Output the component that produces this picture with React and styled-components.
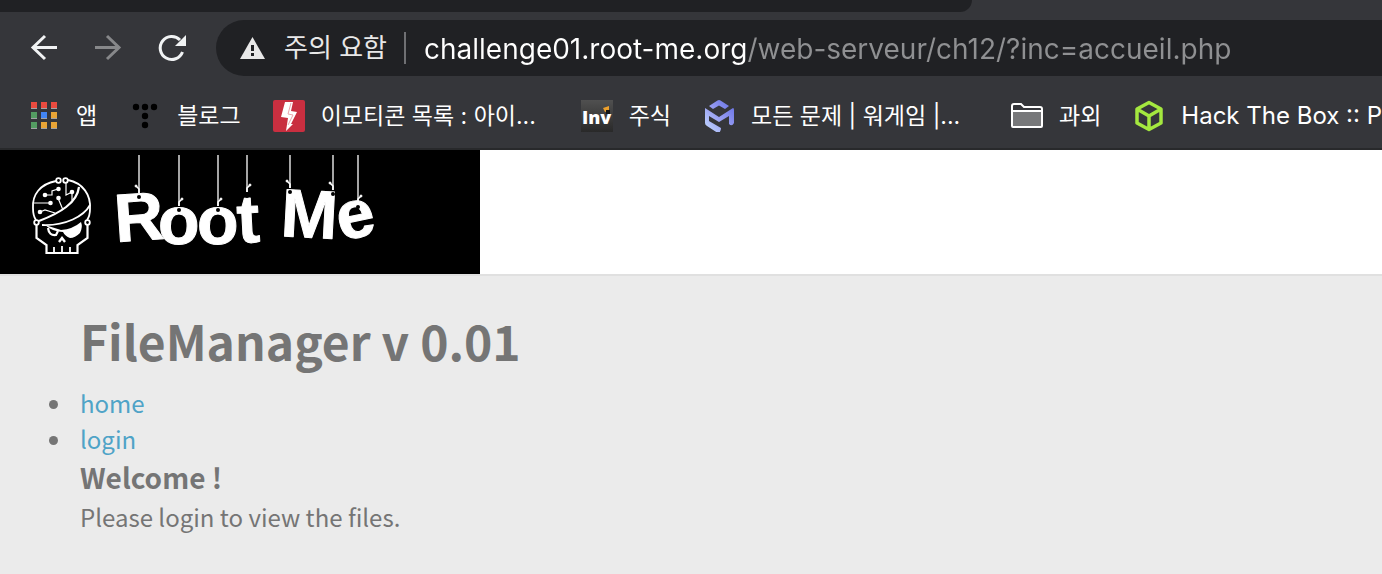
import React from "react";
import styled, { createGlobalStyle } from "styled-components";

const GlobalStyle = createGlobalStyle`
  * {
    box-sizing: border-box;
  }
  body {
    margin: 0;
    background: #ebebeb;
    overflow-x: hidden;
  }
`;

const Browser = styled.div`
  background: #35363a;
  border-bottom: 2px solid #28292b;
  color: #ffffff;
  font-family: Inter, "Noto Sans CJK KR", sans-serif;
  overflow: hidden;
`;

const TabStrip = styled.div`
  height: 12px;
  margin-right: 410px;
  border-bottom-right-radius: 16px;
  background: #202124;
`;

const Toolbar = styled.div`
  display: flex;
  align-items: center;
  padding: 8px 0 0 28px;
`;

const NavButton = styled.button`
  display: flex;
  width: 32px;
  height: 32px;
  margin-right: 32px;
  padding: 0;
  border: none;
  background: none;
  color: ${(props) => (props.disabled ? "#87888a" : "#f1f3f4")};
`;

const AddressBar = styled.div`
  flex: 1;
  display: flex;
  align-items: center;
  height: 56px;
  margin-left: -4px;
  padding-left: 24px;
  border-radius: 28px 0 0 28px;
  background: #202124;
  font-size: 26px;
`;

const SiteInfo = styled.button`
  display: flex;
  align-items: center;
  gap: 19px;
  padding: 0 17px 0 0;
  border: none;
  border-right: 2px solid #6f7073;
  background: none;
  color: #e8e8e8;
  font: inherit;
  line-height: 32px;
  white-space: nowrap;
`;

const Url = styled.input`
  flex: 1;
  min-width: 0;
  height: 42px;
  padding: 2px 0 0;
  margin-left: 18px;
  border: none;
  outline: none;
  color: #ffffff;
  font-family: Inter, sans-serif;
  font-size: 28px;
  background: linear-gradient(to right, #ffffff 324px, #8f9092 324px);
  background-clip: text;
  -webkit-background-clip: text;
  -webkit-text-fill-color: transparent;
`;

const Bookmarks = styled.nav`
  display: flex;
  align-items: center;
  gap: 32px;
  height: 72px;
  padding: 8px 0 0 28px;
`;

const Bookmark = styled.a`
  flex: none;
  display: flex;
  align-items: center;
  gap: 16px;
  color: #ffffff;
  font-size: ${(props) => (props.$latin ? "24px" : "23px")};
  line-height: 32px;
  text-decoration: none;
  white-space: nowrap;
`;

const BookmarkTitle = styled.span`
  min-width: ${(props) => (props.$long ? "228px" : "0")};
`;

const Icon = styled.svg`
  display: block;
  flex: none;
  width: 32px;
  height: 32px;
`;

const SiteHeader = styled.header`
  background: #ffffff;
  border-bottom: 2px solid #e0e0e0;
`;

const Logo = styled.svg`
  display: block;
  width: 480px;
  height: 124px;
  background: #000000;
`;

const Content = styled.main`
  padding: 26px 80px;
  color: #757575;
  font-family: "Noto Sans CJK KR", sans-serif;
  font-size: 24px;
  line-height: 36px;
`;

const Title = styled.h1`
  margin: 0 0 7px;
  font-size: 48px;
  line-height: 76px;
`;

const Menu = styled.ul`
  margin: 0 0 0 -6px;
  padding: 0;
`;

const MenuItem = styled.li`
  padding-left: 6px;
`;

const MenuLink = styled.a`
  color: #4fa3c7;
  text-decoration: none;
`;

const Subtitle = styled.h3`
  margin: 0;
  font-size: 28px;
  line-height: 40px;
`;

const Text = styled.p`
  margin: 0;
  line-height: 40px;
`;

const BackIcon = () => (
  <Icon viewBox="0 0 32 32" fill="none" stroke="currentColor" strokeWidth="3">
    <path d="M29 15.500H5M17 4 5 15.500 17 27" />
  </Icon>
);

const ForwardIcon = () => (
  <Icon viewBox="0 0 32 32" fill="none" stroke="currentColor" strokeWidth="3">
    <path d="M3 15.500h24M15 4l12 11.500L15 27" />
  </Icon>
);

const ReloadIcon = () => (
  <Icon viewBox="0 0 32 32" fill="none">
    <path
      d="M26.500 20A11.500 11.500 0 1 1 24 8"
      stroke="currentColor"
      strokeWidth="3"
    />
    <path d="M30 3v11H19z" fill="currentColor" />
  </Icon>
);

const WarningIcon = () => (
  <svg width="25" height="22" viewBox="0 0 25 22">
    <path d="M12.500 0 25 22H0z" fill="#e8e8e8" />
    <path d="M11 8h3v6h-3zM11 16h3v3h-3z" fill="#202124" />
  </svg>
);

const appColors = [
  ["#e94b3f", "#e94b3f", "#e94b3f"],
  ["#549c62", "#4285f4", "#e8a436"],
  ["#549c62", "#e8a436", "#e8a436"],
];

const AppsIcon = () => (
  <Icon viewBox="0 0 32 32">
    {appColors.map((row, y) =>
      row.map((color, x) => (
        <g key={`${x}-${y}`}>
          <rect x={3 + x * 10} y={2 + y * 10} width="6" height="7" fill="#a2a3a5" />
          <rect x={3 + x * 10} y={2 + y * 10} width="6" height="6" fill={color} />
        </g>
      ))
    )}
  </Icon>
);

const TistoryIcon = () => (
  <Icon viewBox="0 0 32 32">
    <circle cx="7" cy="7" r="3.200" />
    <circle cx="16" cy="7" r="3.200" />
    <circle cx="25" cy="7" r="3.200" />
    <circle cx="16" cy="16" r="3.200" />
    <circle cx="16" cy="25" r="3.200" />
  </Icon>
);

const BoltIcon = () => (
  <Icon viewBox="0 0 32 32">
    <rect width="32" height="32" rx="2" fill="#c92f40" />
    <path d="M12 2h8l-2 9 6 1-6 12h2l-7 7 2-13-7-1z" fill="#ffffff" />
    <path d="m18 3-3 11 5 1-5 10" fill="none" stroke="#e9a5ac" />
  </Icon>
);

const InvIcon = () => (
  <Icon viewBox="0 0 32 32">
    <defs>
      <linearGradient id="inv" x2="0" y2="1">
        <stop stopColor="#505050" />
        <stop offset="1" stopColor="#292929" />
      </linearGradient>
    </defs>
    <rect width="32" height="32" fill="url(#inv)" />
    <text
      x="1"
      y="24"
      fill="#ffffff"
      fontFamily="Open Sans"
      fontSize="18"
      fontWeight="800"
    >
      Inv
    </text>
    <path d="M22 8l6-2v5l-4 1z" fill="#eda02c" />
    <path d="M25 10h4v4h-4z" fill="#171717" />
  </Icon>
);

const WargameIcon = () => (
  <Icon viewBox="0 0 32 32" fill="none">
    <defs>
      <linearGradient id="wargame" x1="1" x2="0" y2="1">
        <stop stopColor="#626de5" />
        <stop offset=".5" stopColor="#969cf1" />
        <stop offset="1" stopColor="#c5dcff" />
      </linearGradient>
    </defs>
    <path
      d="M6 6 14.500 .5q1.500-1 3 0L26 6l-4 3-6-3.500L10 9zM2 8l14 9 14-9q1 0 1 2v13q-2 4-5 1v-8l-10 6-10-6v5l12 7q0 3-2 5-1 0-2-.5L4 26q-2-1-2-3z"
      fill="url(#wargame)"
    />
  </Icon>
);

const FolderIcon = () => (
  <Icon viewBox="0 0 32 32" fill="none" stroke="#ffffff" strokeWidth="2">
    <path d="M1 26V6q0-2 2-2h7l3 3h16q2 0 2 2v17q0 1-1 1H2q-1 0-1-1zM1 11h30" />
    <path d="M2 12h28v14H2z" fill="#77787a" stroke="none" />
  </Icon>
);

const BoxIcon = () => (
  <Icon
    viewBox="0 0 32 32"
    fill="none"
    stroke="#a4e83f"
    strokeWidth="3.500"
    strokeLinejoin="round"
  >
    <path d="m16 2.500 12 6.500v14L16 29.500 4 23V9zM4 9l12 7 12-7M16 16v13" />
  </Icon>
);

const bookmarks = [
  { title: "앱", icon: AppsIcon },
  { title: "블로그", icon: TistoryIcon },
  { title: "이모티콘 목록 : 아이...", icon: BoltIcon, long: true },
  { title: "주식", icon: InvIcon },
  { title: "모든 문제 | 워게임 |...", icon: WargameIcon, long: true },
  { title: "과외", icon: FolderIcon },
  { title: "Hack The Box :: P", icon: BoxIcon, latin: true },
];

// where each string ends, and which way its knot leans
const strings = [
  { x: 139, y: 43, lean: -1 },
  { x: 179, y: 56, lean: 1 },
  { x: 218, y: 56, lean: 1 },
  { x: 247, y: 42, lean: 1 },
  { x: 290, y: 38, lean: -1 },
  { x: 333, y: 40, lean: -1 },
  { x: 358, y: 53, lean: 1 },
];

const RootMeLogo = () => (
  <Logo viewBox="0 0 480 124" role="img" aria-label="Root Me">
    <g fill="none" stroke="#ffffff" strokeWidth="1.800">
      <path d="M56 31C40 34 32 45 33 58q0 8 3 12M68 30c15 3 23 15 22 29q0 7-3 11" />
      <path d="M36.500 75v13l10 7v8h31v-8l10-7V75" strokeWidth="2.200" />
      <path d="M39 71C60 63 77 53 79 37" strokeWidth="2.200" />
      <path d="M42 75c24 1 42-9 48-20" />
      <path d="M54 103v-6M62 103v-7M70 103v-6" />
      <path d="m59 92 3-4 3 4" strokeWidth="2.400" />
      <path d="M48 78q1 8 8 7l2-4" strokeWidth="2.200" />
      <circle cx="58.500" cy="30.500" r="2.300" />
      <circle cx="65.500" cy="30.500" r="2.300" />
      <circle cx="36.500" cy="72.500" r="2.300" />
      <circle cx="87.500" cy="72.500" r="2.300" />
      <path
        d="M45 45h7v-4l6-2M66 33v12l6-3M72 43v7M34 53h15M58 48l5 12M40 62l5-2 10 3"
        strokeWidth="1.200"
      />
    </g>
    <g fill="#ffffff">
      <circle cx="45" cy="45" r="2.300" />
      <circle cx="58.500" cy="39" r="2.300" />
      <circle cx="72" cy="42" r="2.300" />
      <circle cx="50.500" cy="53" r="2.300" />
      <circle cx="58.500" cy="48" r="2.300" />
      <circle cx="40" cy="62" r="2.300" />
      <path d="m45 75 16 5q12-1 20-8 2 5-1 11-5 5-10 5-5-2-7-6-10 0-18-7z" />
    </g>
    <text
      x="116 158 197 238 262 280 341"
      y="92 94 94 93 90 86 91"
      rotate="-4 0 0 -3 0 3 -12"
      fill="#ffffff"
      stroke="#ffffff"
      strokeLinejoin="round"
      fontFamily="Liberation Sans"
      fontSize="68"
      fontWeight="700"
    >
      Root Me
    </text>
    {strings.map(({ x, y, lean }) => (
      <g key={x} fill="none" stroke="#ffffff">
        <path d={`M${x} 5V${y}`} strokeWidth="1.300" />
        <path d={`M${x} ${y}v-4l${lean * 3}-3`} strokeWidth="1.600" />
        <circle cx={x + lean * 3} cy={y - 7} r="1" fill="#ffffff" />
        <circle cx={x} cy={y + 4} r="2" fill="#000000" stroke="none" />
      </g>
    ))}
  </Logo>
);

const App = () => {
  return (
    <>
      <GlobalStyle />
      <Browser>
        <TabStrip />
        <Toolbar>
          <NavButton aria-label="Back">
            <BackIcon />
          </NavButton>
          <NavButton aria-label="Forward" disabled>
            <ForwardIcon />
          </NavButton>
          <NavButton aria-label="Reload">
            <ReloadIcon />
          </NavButton>
          <AddressBar>
            <SiteInfo>
              <WarningIcon />
              주의 요함
            </SiteInfo>
            <Url
              aria-label="Address"
              spellCheck={false}
              defaultValue="challenge01.root-me.org/web-serveur/ch12/?inc=accueil.php"
            />
          </AddressBar>
        </Toolbar>
        <Bookmarks>
          {bookmarks.map(({ title, icon: BookmarkIcon, long, latin }) => (
            <Bookmark key={title} href="#" $latin={latin}>
              <BookmarkIcon />
              <BookmarkTitle $long={long}>{title}</BookmarkTitle>
            </Bookmark>
          ))}
        </Bookmarks>
      </Browser>
      <SiteHeader>
        <RootMeLogo />
      </SiteHeader>
      <Content>
        <Title>FileManager v 0.01</Title>
        <Menu>
          <MenuItem>
            <MenuLink href="#home">home</MenuLink>
          </MenuItem>
          <MenuItem>
            <MenuLink href="#login">login</MenuLink>
          </MenuItem>
        </Menu>
        <Subtitle>Welcome !</Subtitle>
        <Text>Please login to view the files.</Text>
      </Content>
    </>
  );
};

export default App;
